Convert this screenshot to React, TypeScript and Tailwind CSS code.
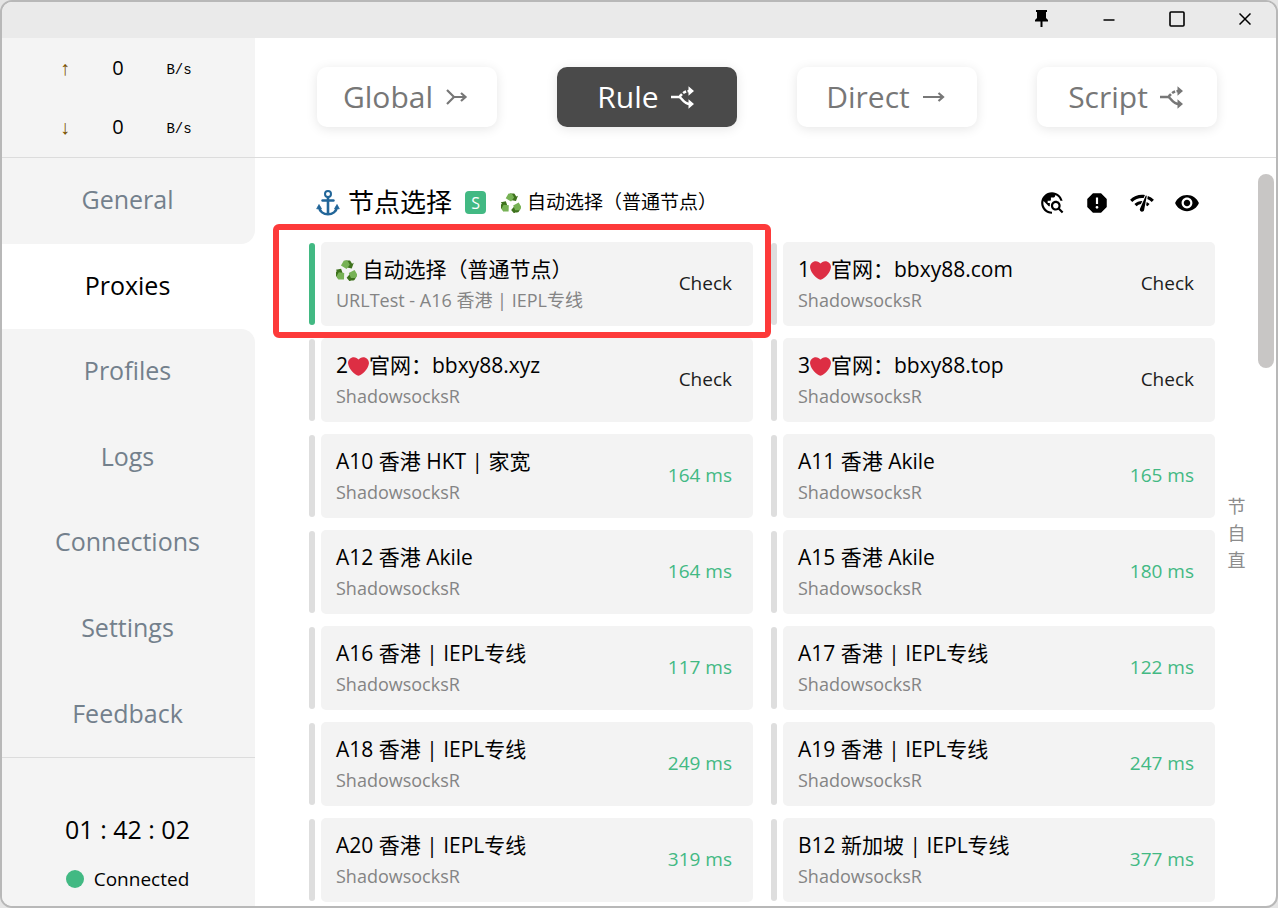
import React from "react";
import { MdTravelExplore, MdReport, MdNetworkCheck, MdVisibility } from "react-icons/md";

const speeds = [
  { arrow: "↑", label: "Upload", value: 0 },
  { arrow: "↓", label: "Download", value: 0 },
];

const navItems = ["General", "Proxies", "Profiles", "Logs", "Connections", "Settings", "Feedback"];

type Proxy = { before?: string; icon?: "recycle" | "heart"; name: string; kind: string; delay?: string };

const proxies: Proxy[] = [
  { icon: "recycle", name: " 自动选择（普通节点）", kind: "URLTest - A16 香港 | IEPL专线" },
  { before: "1", icon: "heart", name: "官网：bbxy88.com", kind: "ShadowsocksR" },
  { before: "2", icon: "heart", name: "官网：bbxy88.xyz", kind: "ShadowsocksR" },
  { before: "3", icon: "heart", name: "官网：bbxy88.top", kind: "ShadowsocksR" },
  { name: "A10 香港 HKT | 家宽", kind: "ShadowsocksR", delay: "164 ms" },
  { name: "A11 香港 Akile", kind: "ShadowsocksR", delay: "165 ms" },
  { name: "A12 香港 Akile", kind: "ShadowsocksR", delay: "164 ms" },
  { name: "A15 香港 Akile", kind: "ShadowsocksR", delay: "180 ms" },
  { name: "A16 香港 | IEPL专线", kind: "ShadowsocksR", delay: "117 ms" },
  { name: "A17 香港 | IEPL专线", kind: "ShadowsocksR", delay: "122 ms" },
  { name: "A18 香港 | IEPL专线", kind: "ShadowsocksR", delay: "249 ms" },
  { name: "A19 香港 | IEPL专线", kind: "ShadowsocksR", delay: "247 ms" },
  { name: "A20 香港 | IEPL专线", kind: "ShadowsocksR", delay: "319 ms" },
  { name: "B12 新加坡 | IEPL专线", kind: "ShadowsocksR", delay: "377 ms" },
];

function HeartIcon() {
  return (
    <svg viewBox="0 0 36 36" className="size-[21px] shrink-0" aria-hidden="true">
      <path
        fill="#dd2e44"
        d="M35.885 11.833c0-5.45-4.418-9.868-9.867-9.868-3.308 0-6.227 1.633-8.018 4.129-1.791-2.496-4.71-4.129-8.017-4.129-5.45 0-9.868 4.417-9.868 9.868 0 .772.098 1.52.266 2.241C1.751 22.587 11.216 31.568 18 34.034c6.783-2.466 16.249-11.447 17.617-19.959.17-.721.268-1.469.268-2.242z"
      />
    </svg>
  );
}

function RecycleIcon({ className }: { className: string }) {
  return (
    <svg viewBox="0 0 36 36" className={className} aria-hidden="true">
      {[0, 120, 240].map((angle) => (
        <g key={angle} transform={`rotate(${angle} 18 20)`}>
          <path fill="#3e721d" d="M16 1h6.500c1.500 0 2.300.8 3 2l2 3.500 3-1.700-3.500 9.700-10-1.900 3-1.700-3-5.400z" />
          <path fill="#77b255" d="M14.500 1H18c1.500.2 2.800 1.800 3.600 3.300l2 3.700-5.500 7.500-9.600-6 4-7C12.800 1.700 13.300 1 14.500 1z" />
        </g>
      ))}
    </svg>
  );
}

function AnchorIcon() {
  return (
    <svg viewBox="0 0 24 26" className="h-[26px] w-6 shrink-0" fill="none" stroke="#226699" strokeWidth="2" aria-hidden="true">
      <circle cx="12" cy="4" r="3" />
      <path d="M12 7v17" strokeWidth="2.600" />
      <path d="M6.500 10.500h11" strokeWidth="2.400" strokeLinecap="round" />
      <path d="M3 17c.5 4.500 4.500 7.300 9 7.300s8.500-2.800 9-7.300" strokeWidth="2.400" />
      <path d="M3 14.500l-2.300 4.300h4.800zM21 14.500l2.300 4.300h-4.800z" fill="#226699" strokeWidth="0.800" strokeLinejoin="round" />
    </svg>
  );
}

function GlobalIcon() {
  return (
    <svg viewBox="0 0 24 24" className="size-6" fill="none" stroke="currentColor" strokeWidth="2.200" aria-hidden="true">
      <path d="M2 5l7 7h12M2 19l7-7M16 8l4.500 4-4.500 4" />
    </svg>
  );
}

function DirectIcon() {
  return (
    <svg viewBox="0 0 24 24" className="size-6" fill="none" stroke="currentColor" strokeWidth="2.200" aria-hidden="true">
      <path d="M1 12h20M16.500 8l4.500 4-4.500 4" />
    </svg>
  );
}

function SplitIcon() {
  return (
    <svg viewBox="0 0 24 24" className="size-6" fill="none" stroke="currentColor" strokeWidth="2.500" aria-hidden="true">
      <path d="M0 12h8c3 0 4 7 11 7" />
      <path d="M8.500 11.500c2-1 3.500-5.500 10-5.500" strokeDasharray="3.500 1.500" />
      <path d="M17.500 1.200l5.500 4.800-5.500 4.800zM17.500 14.200l5.500 4.800-5.500 4.800z" fill="currentColor" stroke="none" />
    </svg>
  );
}

const modes = [
  { name: "Global", Icon: GlobalIcon },
  { name: "Rule", Icon: SplitIcon },
  { name: "Direct", Icon: DirectIcon },
  { name: "Script", Icon: SplitIcon },
];

const tools = [
  { label: "Search proxies", Icon: MdTravelExplore },
  { label: "Report", Icon: MdReport },
  { label: "Test latency", Icon: MdNetworkCheck },
  { label: "Toggle visibility", Icon: MdVisibility },
];

function TitleBar() {
  const button = "flex h-full w-[62px] items-center justify-center";
  return (
    <header className="flex h-9 shrink-0 justify-end gap-1.5 bg-[#eaeaea] pb-[3px] text-black">
      <button className={button} aria-label="Pin window">
        <svg viewBox="0 0 14 18" className="h-[18px] w-[14px]" fill="currentColor" aria-hidden="true">
          <path d="M2 0h11v2h-1v6l2 2v1.500H8.500V17H6.500v-5.500H1V10l2-2V2H2z" />
        </svg>
      </button>
      <button className={button} aria-label="Minimize">
        <svg viewBox="0 0 12 12" className="size-3" stroke="currentColor" strokeWidth="1.500" aria-hidden="true">
          <path d="M.5 7h11" />
        </svg>
      </button>
      <button className={button} aria-label="Maximize">
        <svg viewBox="0 0 16 16" className="size-4" fill="none" stroke="currentColor" strokeWidth="1.600" aria-hidden="true">
          <rect x="1" y="1" width="14" height="14" rx="1" />
        </svg>
      </button>
      <button className={button} aria-label="Close">
        <svg viewBox="0 0 12 12" className="size-3" stroke="currentColor" strokeWidth="1.500" aria-hidden="true">
          <path d="M.5.5l11 11M11.500.5l-11 11" />
        </svg>
      </button>
    </header>
  );
}

function Sidebar() {
  const active = navItems.indexOf("Proxies");
  return (
    <aside className="flex w-[253px] shrink-0 flex-col">
      <div className="flex h-[120px] shrink-0 flex-col border-b border-[#dcdcdc] bg-[#f4f4f4]">
        {speeds.map((s) => (
          <div key={s.label} className="grid flex-1 grid-cols-[54px_52px_70px] items-center pl-9 text-center" aria-label={s.label}>
            <span className="pt-1 font-['Liberation_Mono',monospace] text-xl text-[#7a5200]">{s.arrow}</span>
            <span className="text-xl">{s.value}</span>
            <span className="pt-1 font-['Liberation_Mono',monospace] text-sm">B/s</span>
          </div>
        ))}
      </div>
      <nav className="flex flex-1 flex-col">
        {navItems.map((item, i) => (
          <a
            key={item}
            href={`#${item.toLowerCase()}`}
            className={`flex flex-1 items-center justify-center pr-0.5 pb-0.5 text-[25px] ${
              i === active ? "bg-white text-black" : "bg-[#f4f4f4] text-[#73808c]"
            } ${i === active - 1 ? "rounded-br-[14px]" : ""} ${i === active + 1 ? "rounded-tr-[14px]" : ""}`}
          >
            {item}
          </a>
        ))}
      </nav>
      <div className="flex h-[149px] shrink-0 flex-col items-center justify-end gap-5 border-t border-[#dcdcdc] bg-[#f4f4f4] pr-0.5 pb-[13px]">
        <time className="text-[25px] leading-8">01 : 42 : 02</time>
        <div className="flex items-center gap-2.5 text-[19px] leading-7">
          <span className="size-[18px] rounded-full bg-[#42b983]" />
          Connected
        </div>
      </div>
    </aside>
  );
}

function ProxyCard({ proxy, selected }: { proxy: Proxy; selected: boolean }) {
  return (
    <li className="relative flex h-[84px] items-stretch gap-1.5">
      <span className={`my-px w-1.5 shrink-0 rounded-full ${selected ? "bg-[#42b983]" : "bg-[#dedede]"}`} />
      <div className="flex min-w-0 flex-1 items-center justify-between rounded-[5px] bg-[#f3f3f3] pr-[21px] pl-[15px]">
        <div className="min-w-0">
          <div className="flex h-8 items-center pt-0.5 text-[21px] whitespace-pre text-black">
            {proxy.before}
            {proxy.icon === "heart" && <HeartIcon />}
            {proxy.icon === "recycle" && <RecycleIcon className="size-[21px] shrink-0" />}
            {proxy.name}
          </div>
          <div className="h-[30px] text-lg leading-[30px] whitespace-nowrap text-[#848484]">{proxy.kind}</div>
        </div>
        <button className={`pb-0.5 text-[19px] ${proxy.delay ? "text-[#42b983]" : "text-[#1c1c1c]"}`}>
          {proxy.delay ?? "Check"}
        </button>
      </div>
      {selected && (
        <span className="pointer-events-none absolute -top-[18px] -right-[18px] -bottom-3 -left-9 z-10 rounded-md border-6 border-[#fd3a3a]" />
      )}
    </li>
  );
}

export default function App() {
  return (
    <div className="h-screen bg-[#e4e4e4] font-['Open_Sans','Noto_Sans_CJK_SC',sans-serif] text-black">
      <div className="flex h-full flex-col overflow-hidden rounded-xl border-2 border-[#b8b8b8] bg-white">
        <TitleBar />
        <div className="flex min-h-0 flex-1">
          <Sidebar />
          <main className="flex min-w-0 flex-1 flex-col">
            <div className="flex h-[120px] shrink-0 items-center justify-between border-b border-[#dcdcdc] pr-[59px] pb-0.5 pl-[62px]">
              {modes.map(({ name, Icon }) => (
                <button
                  key={name}
                  className={`flex h-[60px] w-[180px] items-center justify-center gap-3 rounded-[10px] pr-0.5 text-3xl shadow-[0_2px_12px_rgba(0,0,0,0.1)] ${
                    name === "Rule" ? "bg-[#4a4a4a] text-white" : "bg-white text-[#777]"
                  }`}
                >
                  {name}
                  <Icon />
                </button>
              ))}
            </div>
            <div className="flex min-h-0 flex-1 pr-0.5">
              <section className="flex-1 overflow-hidden pl-[54px]">
                <div className="flex h-[84px] items-center justify-between pt-[5px] pr-[15px] pl-[7px]">
                  <div className="flex items-center">
                    <AnchorIcon />
                    <h1 className="ml-2 text-[26px]">节点选择</h1>
                    <span className="ml-[13px] flex h-[23px] w-[21px] items-center justify-center rounded-sm bg-[#42b983] text-base text-white">S</span>
                    <RecycleIcon className="ml-[15px] size-5" />
                    <span className="ml-1.5 text-[19px]">自动选择（普通节点）</span>
                  </div>
                  <div className="flex gap-[19px]">
                    {tools.map(({ label, Icon }) => (
                      <button key={label} aria-label={label}>
                        <Icon className="size-[26px]" />
                      </button>
                    ))}
                  </div>
                </div>
                <ul className="grid grid-cols-2 gap-x-[18px] gap-y-3">
                  {proxies.map((p, i) => (
                    <ProxyCard key={i} proxy={p} selected={i === 0} />
                  ))}
                </ul>
              </section>
              <nav className="flex w-[43px] shrink-0 flex-col items-center justify-center pt-0.5 text-lg leading-[27px] text-[#8c8c8c]">
                <a href="#select">节</a>
                <a href="#auto">自</a>
                <a href="#direct">直</a>
              </nav>
              <div className="w-4 shrink-0 pt-4">
                <div className="h-[194px] rounded-full bg-[#c8c6c5]" />
              </div>
            </div>
          </main>
        </div>
      </div>
    </div>
  );
}
